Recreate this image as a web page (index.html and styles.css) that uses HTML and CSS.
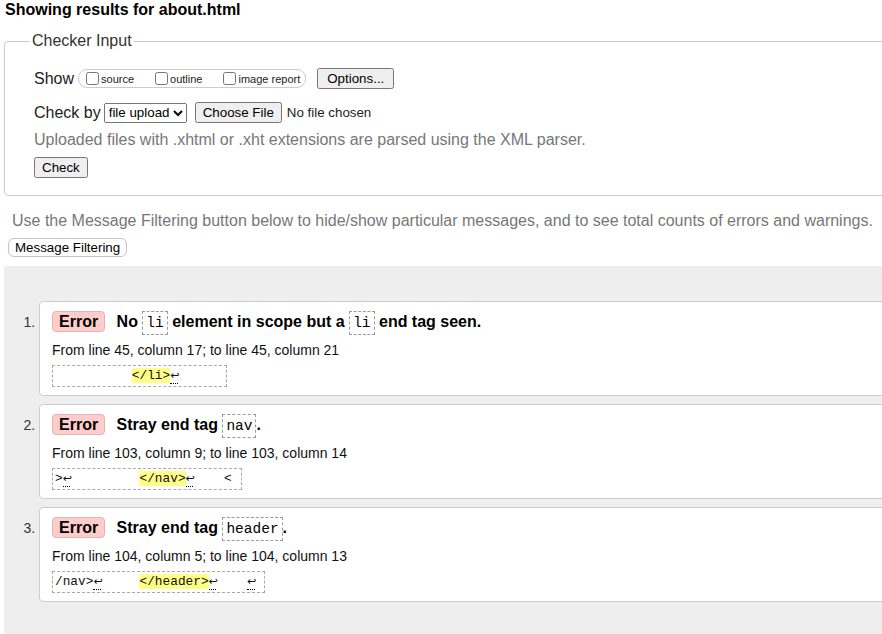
FILE: index.html
```html
<!DOCTYPE html>
<html lang="en">
<head>
<meta charset="utf-8">
<title>Showing results for about.html</title>
<link rel="stylesheet" href="styles.css">
</head>
<body>
<div class="page">
  <h2 class="title">Showing results for about.html</h2>
  <fieldset class="checker">
    <legend>Checker Input</legend>
    <div class="row show-row">
      <span class="label">Show</span>
      <span class="opts">
        <label><input type="checkbox">source</label>
        <label><input type="checkbox">outline</label>
        <label><input type="checkbox">image report</label>
      </span>
      <button class="btn options">Options...</button>
    </div>
    <div class="row check-row">
      <span class="label">Check by</span>
      <select class="sel"><option>file upload</option></select>
      <input type="file" class="file">
    </div>
    <p class="hint">Uploaded files with .xhtml or .xht extensions are parsed using the XML parser.</p>
    <button class="btn check">Check</button>
  </fieldset>
  <p class="filter-note">Use the Message Filtering button below to hide/show particular messages, and to see total counts of errors and warnings.</p>
  <button class="filter-btn">Message Filtering</button>
  <div class="results">
    <ol class="msgs">
      <li class="msg">
        <p class="message"><strong class="badge">Error</strong> No <code>li</code> element in scope but a <code>li</code> end tag seen.</p>
        <p class="location">From line 45, column 17; to line 45, column 21</p>
        <p class="extract"><code>          <mark>&lt;/li&gt;</mark><b>↩</b>      </code></p>
      </li>
      <li class="msg">
        <p class="message"><strong class="badge">Error</strong> Stray end tag <code>nav</code>.</p>
        <p class="location">From line 103, column 9; to line 103, column 14</p>
        <p class="extract"><code>&gt;<b>↩</b>         <mark>&lt;/nav&gt;</mark><b>↩</b>    &lt; </code></p>
      </li>
      <li class="msg">
        <p class="message"><strong class="badge">Error</strong> Stray end tag <code>header</code>.</p>
        <p class="location">From line 104, column 5; to line 104, column 13</p>
        <p class="extract"><code>/nav&gt;<b>↩</b>     <mark>&lt;/header&gt;</mark><b>↩</b>    <b>↩</b> </code></p>
      </li>
    </ol>
  </div>
</div>
</body>
</html>
```

FILE: styles.css
```css
html, body {
  margin: 0;
  padding: 0;
  overflow: hidden;
}

body {
  width: 882px;
  height: 634px;
  background: #fff;
  color: #222;
  font-family: "Liberation Sans", Arial, sans-serif;
}

.page {
  width: 1000px;
}

.title {
  margin: 0;
  padding: 1px 0 0 5px;
  font-size: 16px;
  line-height: 18px;
  font-weight: bold;
  color: #000;
}

.checker {
  margin: 13px 0 0 4px;
  padding: 0 0 17px 29px;
  border: 1px solid #ccc;
  border-radius: 4px;
  min-width: 0;
}

.checker legend {
  margin-left: -4px;
  padding: 0 2px;
  font-size: 16px;
  line-height: 18px;
  color: #333;
}

.row {
  display: flex;
  align-items: center;
  height: 21px;
}

.show-row {
  margin-top: 18px;
}

.check-row {
  margin-top: 13px;
}

.label {
  font-size: 16px;
  color: #222;
}

.opts {
  display: inline-flex;
  align-items: center;
  gap: 21px;
  height: 17px;
  margin-left: 4px;
  padding: 0 5px 0 7px;
  border: 1px solid #ccc;
  border-radius: 9px;
}

.opts label {
  display: inline-flex;
  align-items: center;
  font-size: 11px;
  color: #222;
}

.opts input {
  width: 13px;
  height: 13px;
  margin: 0 2px 0 0;
}

.btn {
  font-family: "Liberation Sans", Arial, sans-serif;
  font-size: 13.333px;
  padding: 1px 6px;
}

.options {
  margin-left: 11px;
  padding: 1px 8px;
}

.sel {
  margin-left: 3px;
  font-family: "Liberation Sans", Arial, sans-serif;
  font-size: 13.333px;
  height: 20px;
}

.file {
  margin-left: 8px;
  font-family: "Liberation Sans", Arial, sans-serif;
  font-size: 13.333px;
  color: #222;
}

.file::file-selector-button {
  font-family: "Liberation Sans", Arial, sans-serif;
  font-size: 13.333px;
  padding: 1px 6px;
  margin-right: 5px;
}

.hint {
  margin: 8px 0 0;
  font-size: 16px;
  line-height: 18px;
  color: #777;
}

.check {
  display: block;
  margin-top: 8px;
}

.filter-note {
  margin: 16px 0 0;
  padding-left: 12px;
  font-size: 16px;
  line-height: 18px;
  color: #777;
}

.filter-btn {
  display: block;
  margin: 8px 0 0 8px;
  height: 19px;
  padding: 0 6px;
  font-family: "Liberation Sans", Arial, sans-serif;
  font-size: 13.333px;
  color: #000;
  background: #fff;
  border: 1px solid #c4c4c4;
  border-radius: 6px;
}

.results {
  margin: 9px 0 0 4px;
  padding: 35px 0 40px;
  background: #eee;
  border-radius: 3px 0 0 3px;
}

.msgs {
  margin: 0;
  padding-left: 35px;
  list-style: decimal;
}

.msg {
  margin-bottom: 8px;
  padding: 8px 12px 8px;
  background: #fff;
  border: 1px solid #ccc;
  border-radius: 4px;
  font-size: 14px;
  color: #111;
}

.msg::marker {
  color: #333;
  font-size: 14px;
}

.message {
  margin: 0;
  font-size: 16px;
  font-weight: bold;
  line-height: 24px;
  color: #000;
}

.badge {
  display: inline-block;
  margin-right: 7px;
  padding: 0 6px;
  line-height: 19px;
  background: #fcc;
  border: 1px solid #e2b5b5;
  border-radius: 4px;
}

.message code {
  display: inline-block;
  padding: 0 3px;
  font-family: "Liberation Mono", "DejaVu Sans Mono", monospace;
  font-size: 14.5px;
  font-weight: normal;
  line-height: 22px;
  border: 1px dashed #999;
}

.location {
  margin: 7px 0 6px;
  font-size: 14px;
  line-height: 17px;
  color: #111;
}

.extract {
  display: block;
  width: fit-content;
  margin: 0;
  padding: 1px 2px;
  border: 1px dashed #aaa;
  font-family: "Liberation Mono", "DejaVu Sans Mono", monospace;
  font-size: 12.8px;
  line-height: 18px;
  white-space: pre;
}

.extract code {
  font-family: inherit;
  font-size: inherit;
}

.extract mark {
  background: #ff8;
  color: inherit;
}

.extract b {
  display: inline-block;
  width: 7.68px;
  font-weight: normal;
  font-family: "DejaVu Sans", sans-serif;
  font-size: 11px;
  line-height: 14px;
  text-align: center;
  border-bottom: 1px dotted #000;
}
```
